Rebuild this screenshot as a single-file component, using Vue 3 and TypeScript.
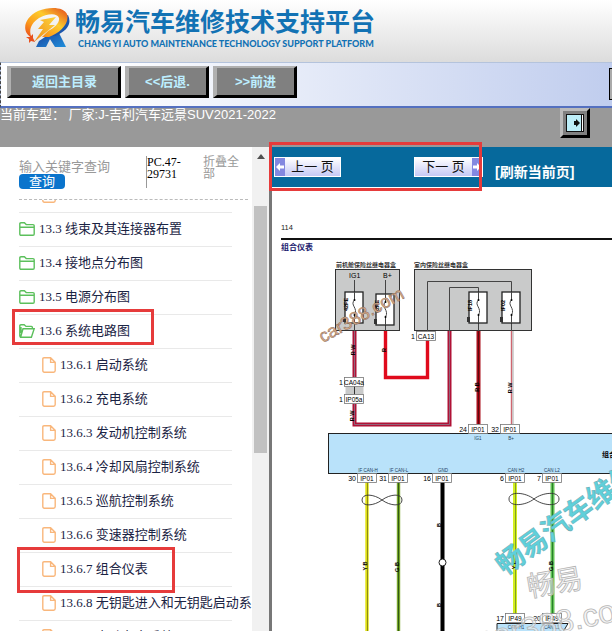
<script setup lang="ts">
import { ref } from 'vue'

interface TreeNode {
  no: string
  title: string
  kind: 'folder' | 'open' | 'file'
  marked?: boolean
}

const keyword = ref('')

const nodes: TreeNode[] = [
  { no: '', title: '', kind: 'file' },
  { no: '13.3', title: '线束及其连接器布置', kind: 'folder' },
  { no: '13.4', title: '接地点分布图', kind: 'folder' },
  { no: '13.5', title: '电源分布图', kind: 'folder' },
  { no: '13.6', title: '系统电路图', kind: 'open', marked: true },
  { no: '13.6.1', title: '启动系统', kind: 'file' },
  { no: '13.6.2', title: '充电系统', kind: 'file' },
  { no: '13.6.3', title: '发动机控制系统', kind: 'file' },
  { no: '13.6.4', title: '冷却风扇控制系统', kind: 'file' },
  { no: '13.6.5', title: '巡航控制系统', kind: 'file' },
  { no: '13.6.6', title: '变速器控制系统', kind: 'file' },
  { no: '13.6.7', title: '组合仪表', kind: 'file', marked: true },
  { no: '13.6.8', title: '无钥匙进入和无钥匙启动系', kind: 'file' },
  { no: '13.6.9', title: '电动车窗系统', kind: 'file' },
]

interface Tag {
  x: number
  y: number
  w: number
  pin: string
  label: string
}

const tags: Tag[] = [
  { x: 417, y: 331, w: 19, pin: '1', label: 'CA13' },
  { x: 345, y: 377, w: 19, pin: '1', label: 'CA04a' },
  { x: 345, y: 394, w: 19, pin: '1', label: 'IP05a' },
  { x: 469, y: 424, w: 19, pin: '24', label: 'IP01' },
  { x: 501, y: 424, w: 19, pin: '32', label: 'IP01' },
  { x: 358, y: 473, w: 19, pin: '30', label: 'IP01' },
  { x: 389, y: 473, w: 19, pin: '31', label: 'IP01' },
  { x: 433, y: 473, w: 19, pin: '16', label: 'IP01' },
  { x: 506, y: 473, w: 19, pin: '6', label: 'IP01' },
  { x: 543, y: 473, w: 19, pin: '7', label: 'IP01' },
  { x: 506, y: 613, w: 19, pin: '17', label: 'IP49' },
  { x: 543, y: 613, w: 19, pin: '20', label: 'IP49' },
]

const fuses = [
  { x: 345, y: 292, label: '42FE' },
  { x: 376, y: 294, label: '42FE' },
  { x: 469, y: 292, label: 'IF18' },
  { x: 502, y: 292, label: 'IF02' },
]

const wireCodes = [
  { x: 355, y: 350, text: 'R W' },
  { x: 386, y: 350, text: 'R' },
  { x: 354, y: 416, text: 'R W' },
  { x: 479, y: 387, text: 'R B' },
  { x: 512, y: 388, text: 'R W' },
  { x: 367, y: 566, text: 'Y B' },
  { x: 399, y: 567, text: 'G B' },
  { x: 441, y: 525, text: 'B' },
  { x: 441, y: 605, text: 'B' },
  { x: 516, y: 565, text: 'Y L' },
  { x: 553, y: 566, text: 'G B' },
]
</script>

<template>
  <div class="page">
    <header class="brand">
      <svg class="logo" viewBox="0 0 46 42" aria-hidden="true">
        <defs>
          <linearGradient id="flame" x1="0" y1="1" x2="1" y2="0">
            <stop offset="0" stop-color="#e8401c" />
            <stop offset="0.3" stop-color="#fb9a1b" />
            <stop offset="0.6" stop-color="#fdcb2d" />
            <stop offset="1" stop-color="#e2451b" />
          </linearGradient>
          <linearGradient id="bolt" x1="0" y1="1" x2="1" y2="0">
            <stop offset="0" stop-color="#f08a18" />
            <stop offset="1" stop-color="#fdd53a" />
          </linearGradient>
          <linearGradient id="leg" x1="0" y1="0" x2="1" y2="1">
            <stop offset="0" stop-color="#1d3f98" />
            <stop offset="1" stop-color="#1f8fdc" />
          </linearGradient>
        </defs>
        <path d="M12 40 L15 34 L24 28 L28 28 L22 40 Z M24 29 L34 24 L42 40 L31 40 Z" fill="url(#leg)" />
        <path d="M44 8 Q50 21 31 29 L25 29 Q42 20 41 9 Z" fill="#1c55ac" />
        <path d="M8 31 C-4 24 1 10 14 4 C26 -1 40 0 43 7 C46 17 35 26 25 30 L18 30 L24 24 C31 21 36 15 35 11 C33 5 22 7 15 11 C7 16 4 24 8 31 Z" fill="url(#flame)" />
        <path d="M16 13 L32 10 L25 18 L31 18 L10 35 L19 22 L14 22 L20 15 Z" fill="url(#bolt)" />
        <path d="M2 30 L6 30 L9 27 L9 31 L11 35 L7 34 L5 36 L5 32 Z" fill="#e8501d" />
      </svg>
      <div class="names">
        <h1>畅易汽车维修技术支持平台</h1>
        <p>CHANG YI AUTO MAINTENANCE TECHNOLOGY SUPPORT PLATFORM</p>
      </div>
    </header>

    <nav class="toolbar">
      <button type="button" class="bevel wide">返回主目录</button>
      <button type="button" class="bevel">&lt;&lt;后退.</button>
      <button type="button" class="bevel">&gt;&gt;前进</button>
      <button type="button" class="edge" aria-label="更多"></button>
    </nav>

    <div class="vehicle">
      <span>当前车型： 厂家:J-吉利汽车远景SUV2021-2022</span>
      <button type="button" class="collapse" aria-label="展开">
        <svg viewBox="0 0 18 18" aria-hidden="true">
          <rect x="0.5" y="0.5" width="17" height="17" fill="#bdeef8" stroke="#111" />
          <path d="M15.5 1 V17" stroke="#111" />
          <rect x="16" y="1" width="1" height="16" fill="#fff" />
          <path d="M8 7 H10 V5 L14 9 L10 13 V11 H8 Z" fill="#111" />
        </svg>
      </button>
    </div>

    <main class="body">
      <aside class="side">
        <div class="pane">
          <form class="search" @submit.prevent>
            <div class="field">
              <input v-model="keyword" type="text" placeholder="输入关键字查询" aria-label="关键字" />
              <button type="submit">查询</button>
            </div>
            <span class="code">PC.47-29731</span>
            <a class="fold" href="#">折叠全部</a>
          </form>
          <ul class="tree">
            <li v-for="(n, i) in nodes" :key="i" :class="[n.kind, { marked: n.marked }]">
              <a href="#">
                <svg v-if="n.kind === 'file'" class="ico-file" viewBox="0 0 14 16" aria-hidden="true">
                  <path d="M2 0.8 H8.6 L13.2 5.4 V13.6 Q13.2 15.2 11.6 15.2 H2.4 Q0.8 15.2 0.8 13.6 V2 Q0.8 0.8 2 0.8 Z M8.6 0.8 V5.4 H13.2" />
                </svg>
                <svg v-else-if="n.kind === 'folder'" class="ico-folder" viewBox="0 0 16 14" aria-hidden="true">
                  <path d="M0.8 12 V2 Q0.8 0.8 2 0.8 H5.4 L7.2 2.6 H14 Q15.2 2.6 15.2 3.8 V12 Q15.2 13.2 14 13.2 H2 Q0.8 13.2 0.8 12 Z M0.8 5.2 H15.2" />
                </svg>
                <svg v-else class="ico-folder" viewBox="0 0 16 14" aria-hidden="true">
                  <path d="M1.6 13.2 L0.8 12 V2 Q0.8 0.8 2 0.8 H5.2 L7 2.4 H12.4 Q13.4 2.4 13.4 3.4 V4.6 M1.6 13.2 H12.4 L15.2 4.8 H4 Z M2 3 V9" />
                </svg>
                <span>{{ n.no }} {{ n.title }}</span>
              </a>
            </li>
          </ul>
        </div>
        <div class="scroll" aria-hidden="true">
          <i class="up"></i>
          <i class="thumb"></i>
        </div>
      </aside>

      <section class="viewer">
        <div class="pager">
          <button type="button" class="turn prev">
            <svg viewBox="0 0 10 18" aria-hidden="true"><path d="M1 9 L5 5 V7.500 H9 V10.500 H5 V13 Z" /></svg>
            <span>上一 页</span>
          </button>
          <button type="button" class="turn next">
            <span>下一 页</span>
            <svg viewBox="0 0 10 18" aria-hidden="true"><path d="M9 9 L5 5 V7.500 H1 V10.500 H5 V13 Z" /></svg>
          </button>
          <a class="reload" href="#">[刷新当前页]</a>
          <div class="marker"></div>
        </div>

        <svg class="sheet" viewBox="272 187 340 444" preserveAspectRatio="xMinYMin slice" role="img" aria-label="组合仪表">
          <text x="281" y="230" font-size="7.5" fill="#222">114</text>
          <rect x="281" y="238" width="340" height="2" fill="#111" />
          <text x="281" y="250" class="cn" font-size="8" fill="#20206e">组合仪表</text>

          <text x="336" y="267" class="cn" font-size="6" fill="#333">前机舱保险丝继电器盒</text>
          <text x="414" y="267" class="cn" font-size="6" fill="#333">室内保险丝继电器盒</text>
          <g fill="#c9caca" stroke="#333">
            <rect x="335.5" y="269.5" width="64" height="61" />
            <rect x="414.5" y="269.5" width="117" height="61" />
            <rect x="345.5" y="387" width="18" height="8" stroke="none" />
          </g>
          <text x="349" y="278" font-size="7">IG1</text>
          <text x="383" y="278" font-size="7">B+</text>
          <path d="M354.5 280 V331 M385.5 280 V331 M427.5 331 V281.5 H511.5 V331 M449.5 331 V287.5 H478.5 V331" fill="none" stroke="#444" />
          <g v-for="f in fuses" :key="f.x">
            <rect :x="f.x" :y="f.y" width="18" height="31" fill="#fff" stroke="#222" stroke-width="1.3" />
            <path :d="`M${f.x + 9.5} ${f.y} v8 c-5 5 4 8 0 15 v8`" fill="none" stroke="#444" />
            <circle :cx="f.x + 9.5" :cy="f.y + 8" r="1" />
            <circle :cx="f.x + 9.5" :cy="f.y + 23" r="1" />
            <text :transform="`translate(${f.x + 2.5} ${f.y + 19}) rotate(-90)`" font-size="5.5" font-weight="bold">{{ f.label }}</text>
            <rect :x="f.x - 2" :y="f.y + 25" width="3" height="5" fill="#333" />
          </g>

          <g fill="none" stroke-width="3">
            <path d="M354.5 331 V377 M354.5 404 V424.5 H449.5 V331" stroke="#b01236" stroke-width="4" />
            <path d="M354.5 331 V377 M354.5 404 V424.5 H449.5 V331" stroke="#92647a" stroke-width="1" />
            <path d="M385.5 331 V377.5 H427.5 V340" stroke="#e00a1c" stroke-width="3.4" />
            <path d="M478.5 331 V424" stroke="#a80c18" stroke-width="4" />
            <path d="M478.5 331 V424" stroke="#5e0a10" stroke-width="1" />
            <path d="M511.5 331 V424" stroke="#e9bcc0" stroke-width="2" />
            <path d="M511.5 331 V424" stroke="#cf6670" stroke-width="1" />
            <path d="M513 331 V424" stroke="#aaa" stroke-width="1" />
          </g>
          <path d="M354.5 386 V395" stroke="#333" />

          <rect x="328.5" y="433.5" width="300" height="40" fill="#b9e2fa" stroke="#222" />
          <path d="M497 623.5 H568 L563 632 H497 Z" fill="#b9e2fa" stroke="#222" />
          <g font-size="4.5" fill="#23405a" text-anchor="middle">
            <text x="478" y="440">IG1</text>
            <text x="511" y="440">B+</text>
            <text x="368" y="472">IF CAN-H</text>
            <text x="399" y="472">IF CAN-L</text>
            <text x="443" y="472">GND</text>
            <text x="516" y="472">CAN H2</text>
            <text x="552" y="472">CAN L2</text>
            <text x="516" y="629">CAN H1</text>
            <text x="552" y="629">CAN L1</text>
          </g>
          <text x="602" y="457" class="cn" font-size="7">组合仪表</text>

          <g fill="none" stroke-width="3.4">
            <path d="M367 482 V632" stroke="#dfe012" /><path d="M367.5 482 V632" stroke="#8d8b13" stroke-width="1" />
            <path d="M398.5 482 V632" stroke="#78a62b" /><path d="M398.5 482 V632" stroke="#315a14" stroke-width="1" />
            <path d="M442.5 482 V632" stroke="#000" stroke-width="4" />
            <path d="M515 482 V614" stroke="#d3ee20" stroke-width="4" /><path d="M515.5 482 V614" stroke="#839f22" stroke-width="1" />
            <path d="M552.5 482 V614" stroke="#62c254" stroke-width="4" /><path d="M552.5 482 V614" stroke="#28802b" stroke-width="1" />
          </g>
          <circle cx="442.5" cy="562.5" r="3.5" fill="#fff" stroke="#222" />
          <g fill="none" stroke="#333" stroke-width="0.9">
            <path d="M382 500 C374 494 362 493 362 500 C362 507 374 506 382 500 C390 494 402 493 402 500 C402 507 390 506 382 500 Z" />
            <path d="M534 499 C525 492 509 491 509 499 C509 507 525 506 534 499 C543 492 559 491 559 499 C559 507 543 506 534 499 Z" />
          </g>

          <g v-for="t in tags" :key="`${t.x}-${t.y}`">
            <rect :x="t.x - 0.5" :y="t.y + 0.5" :width="t.w" height="9" fill="#fff" stroke="#777" stroke-width="0.8" />
            <text :x="t.x + 9" :y="t.y + 7.5" font-size="6.5" text-anchor="middle">{{ t.label }}</text>
            <text :x="t.x - 2" :y="t.y + 7.5" font-size="7" text-anchor="end">{{ t.pin }}</text>
          </g>
          <text v-for="c in wireCodes" :key="`${c.x}-${c.y}`" :transform="`translate(${c.x} ${c.y}) rotate(-90)`" font-size="5.5" text-anchor="middle" font-weight="bold">{{ c.text }}</text>

          <text transform="translate(323 343) rotate(-29)" font-size="18" fill="#dcae8c" stroke="#8d6e5b" stroke-width="0.5">car388.com</text>
          <text class="cn" transform="translate(505 576) rotate(-36)" font-size="28" fill="#5fd0da" stroke="#6f9fa8" stroke-width="0.4">畅易汽车维修</text>
          <g fill="#eee" fill-opacity="0.6" stroke="#b5b5b5" stroke-width="0.8">
            <text class="thin" transform="translate(529 597) rotate(-10)" font-size="28">畅易</text>
            <text transform="translate(480 650) rotate(-12)" font-size="32">car388.com</text>
          </g>
        </svg>
      </section>
    </main>
  </div>
</template>

<style>
body {
  margin: 0;
}
</style>

<style scoped>
.page {
  height: 100vh;
  display: flex;
  flex-direction: column;
  overflow: hidden;
  background: #fff;
  font-family: "Liberation Sans", "Noto Sans CJK SC", sans-serif;
  font-size: 13px;
}

.page *,
.page *::after {
  box-sizing: border-box;
}

a {
  color: inherit;
  text-decoration: none;
}

button {
  padding: 0;
  font: inherit;
}

.brand {
  flex: none;
  height: 62px;
  padding: 7px 24px 0;
  display: flex;
  gap: 5px;
  background: linear-gradient(#fff, #dcdcdc);
}

.logo {
  width: 46px;
  height: 42px;
}

.names {
  color: #1272b4;
  white-space: nowrap;
}

.names h1 {
  margin: 0;
  font-size: 25px;
  line-height: 30px;
  font-weight: bold;
}

.names p {
  margin: 0 0 0 3px;
  font-family: Lato, sans-serif;
  font-size: 9px;
  line-height: 14px;
  font-weight: 900;
}

.toolbar {
  flex: none;
  height: 46px;
  padding: 3px 0 0 6px;
  display: flex;
  align-items: flex-start;
  gap: 4px;
  border-top: 1px solid #b4c3dc;
  border-left: 1px dashed #444;
  border-bottom: 2px solid #5470c0;
  background: linear-gradient(90deg, #fff 15%, #c0cdee);
}

.bevel {
  width: 84px;
  height: 32px;
  border: solid;
  border-width: 2px 3px 3px 4px;
  border-color: #b0b0b0 #000 #000 #b0b0b0;
  background: #808080;
  color: #bdeeff;
  line-height: 25px;
  font-weight: bold;
}

.bevel.wide {
  width: 114px;
}

.edge {
  width: 3px;
  height: 32px;
  margin-left: auto;
  align-self: flex-end;
  margin-bottom: 6px;
  border: 1px solid #000;
  border-right: 0;
  background: #aaa;
}

.vehicle {
  flex: none;
  height: 39px;
  padding-right: 22px;
  display: flex;
  justify-content: space-between;
  align-items: flex-start;
  background: #999;
  color: #fff;
  line-height: 14px;
}

.collapse {
  width: 30px;
  height: 30px;
  display: grid;
  place-items: center;
  border: 3px solid;
  border-color: #bbb #000 #000 #bbb;
  background: #808080;
}

.collapse svg {
  width: 18px;
  height: 18px;
}

.body {
  flex: 1;
  min-height: 0;
  display: flex;
}

.side {
  flex: none;
  width: 272px;
  display: flex;
  border-right: 3px solid #777;
}

.pane {
  flex: 1;
  min-width: 0;
  display: flex;
  flex-direction: column;
  overflow: hidden;
}

.search {
  flex: none;
  height: 53px;
  margin: 0 4px 0 19px;
  padding-top: 9px;
  display: flex;
  border-bottom: 1px dashed #bbb;
  line-height: 12px;
}

.field {
  width: 127px;
  padding-top: 3px;
  display: flex;
  flex-direction: column;
  align-items: flex-start;
}

.field input {
  width: 92px;
  height: 15px;
  padding: 0;
  border: 0;
  outline: 0;
  font: inherit;
  line-height: 15px;
}

.field input::placeholder {
  color: #999;
}

.field button {
  width: 46px;
  height: 15px;
  border: 0;
  border-radius: 4px;
  background: #0a74cc;
  color: #fff;
  line-height: 14px;
}

.code {
  width: 38px;
  height: 32px;
  margin-right: 19px;
  border-left: 1px solid #999;
  font-family: "Liberation Serif", serif;
  font-size: 12px;
}

.fold {
  width: 40px;
  color: #999;
  font-size: 12px;
}

.tree {
  flex: 1;
  min-height: 0;
  margin: 0;
  padding: 0 0 0 19px;
  overflow: hidden;
  list-style: none;
  color: #1b2444;
  font-family: "Liberation Serif", "Noto Sans CJK SC", serif;
}

.tree li {
  position: relative;
  height: 34px;
  margin-right: 20px;
  border-bottom: 1px solid #e9e9e9;
}

.tree li:first-child {
  margin-top: -21px;
}

.tree a {
  height: 32px;
  display: flex;
  align-items: center;
  gap: 4px;
  line-height: 18px;
  white-space: nowrap;
}

.tree svg {
  flex: none;
  fill: none;
}

.ico-folder {
  width: 16px;
  height: 14px;
  stroke: #5cc05c;
  stroke-width: 1.4;
}

.ico-file {
  width: 14px;
  height: 16px;
  stroke: #f9b77c;
  stroke-width: 1.4;
}

.tree .file a {
  padding-left: 23px;
}

.tree .marked::after {
  content: "";
  position: absolute;
  top: -6px;
  left: -7px;
  width: 142px;
  height: 36px;
  border: 3px solid #e63b3b;
  pointer-events: none;
}

.tree .file.marked::after {
  left: -2px;
  width: 158px;
  height: 46px;
}

.tree .marked {
  z-index: 1;
}

.scroll {
  flex: none;
  width: 17px;
  display: flex;
  flex-direction: column;
  align-items: center;
  background: #f1f1f1;
}

.up {
  margin-top: 7px;
  border: 4px solid transparent;
  border-top: 0;
  border-bottom: 5px solid #505050;
}

.thumb {
  width: 13px;
  height: 51%;
  margin-top: 47px;
  background: #c1c1c1;
}

.viewer {
  flex: 1;
  min-width: 0;
  display: flex;
  flex-direction: column;
}

.pager {
  position: relative;
  flex: none;
  height: 40px;
  padding-left: 2px;
  display: flex;
  align-items: center;
  background: #06699c;
}

.turn {
  height: 20px;
  display: flex;
  align-items: center;
  border: 1px solid #fff;
  background: linear-gradient(#fff, #c5c9f5);
  color: #111;
  line-height: 16px;
  white-space: nowrap;
}

.turn span {
  flex: 1;
  text-align: center;
}

.turn svg {
  width: 10px;
  height: 18px;
  background: #8388e0;
  fill: #fff;
}

.prev {
  width: 67px;
}

.next {
  width: 69px;
  margin-left: 73px;
}

.reload {
  margin: 10px 0 0 12px;
  color: #fff;
  font-size: 14px;
  line-height: 18px;
  font-weight: bold;
  white-space: nowrap;
}

.marker {
  position: absolute;
  top: -5px;
  left: -3px;
  width: 213px;
  height: 49px;
  border: 3px solid #e63b3b;
  pointer-events: none;
}

.sheet {
  flex: 1;
  width: 100%;
  min-height: 0;
  font-family: "Liberation Sans", sans-serif;
}

.cn {
  font-family: "Noto Sans CJK SC", sans-serif;
  font-weight: bold;
}

.thin {
  font-family: "Noto Sans CJK SC", sans-serif;
}
</style>
